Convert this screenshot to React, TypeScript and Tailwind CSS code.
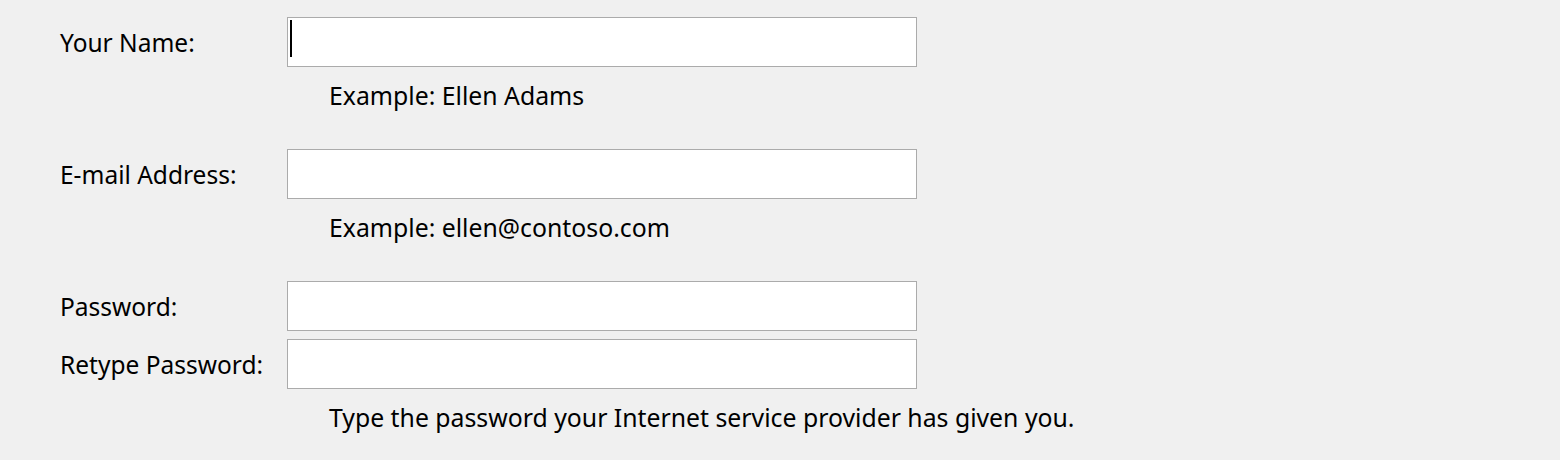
import React from "react";

const font = { fontFamily: '"Noto Sans", "Open Sans", sans-serif' };

function Field({ label, caret = false }: { label: string; caret?: boolean }) {
  return (
    <>
      <label className="flex items-center h-[50px] pt-[2px] text-[24.5px] text-black whitespace-nowrap">{label}</label>
      <div className="relative h-[50px]">
        <input
          type="text"
          className="w-full h-full bg-white border border-[#ababab] outline-none px-1 text-[24px]"
        />
        {caret && <span className="absolute left-[3px] top-[3px] w-[2px] h-[37px] bg-black" />}
      </div>
    </>
  );
}

function Hint({ text }: { text: string }) {
  return (
    <>
      <div />
      <div className="pl-[42px] mt-[12px] h-[32px] leading-[32px] text-[24.8px] text-black whitespace-nowrap">{text}</div>
    </>
  );
}

export default function App() {
  return (
    <div className="w-[1560px] h-[460px] bg-[#f0f0f0] pl-[60px] pt-[17px]" style={font}>
      <div className="grid grid-cols-[227px_630px]">
        <Field label="Your Name:" caret />
        <Hint text="Example: Ellen Adams" />
        <div className="col-span-2 h-[38px]" />
        <Field label="E-mail Address:" />
        <Hint text="Example: ellen@contoso.com" />
        <div className="col-span-2 h-[38px]" />
        <Field label="Password:" />
        <div className="col-span-2 h-[8px]" />
        <Field label="Retype Password:" />
        <Hint text="Type the password your Internet service provider has given you." />
      </div>
    </div>
  );
}
